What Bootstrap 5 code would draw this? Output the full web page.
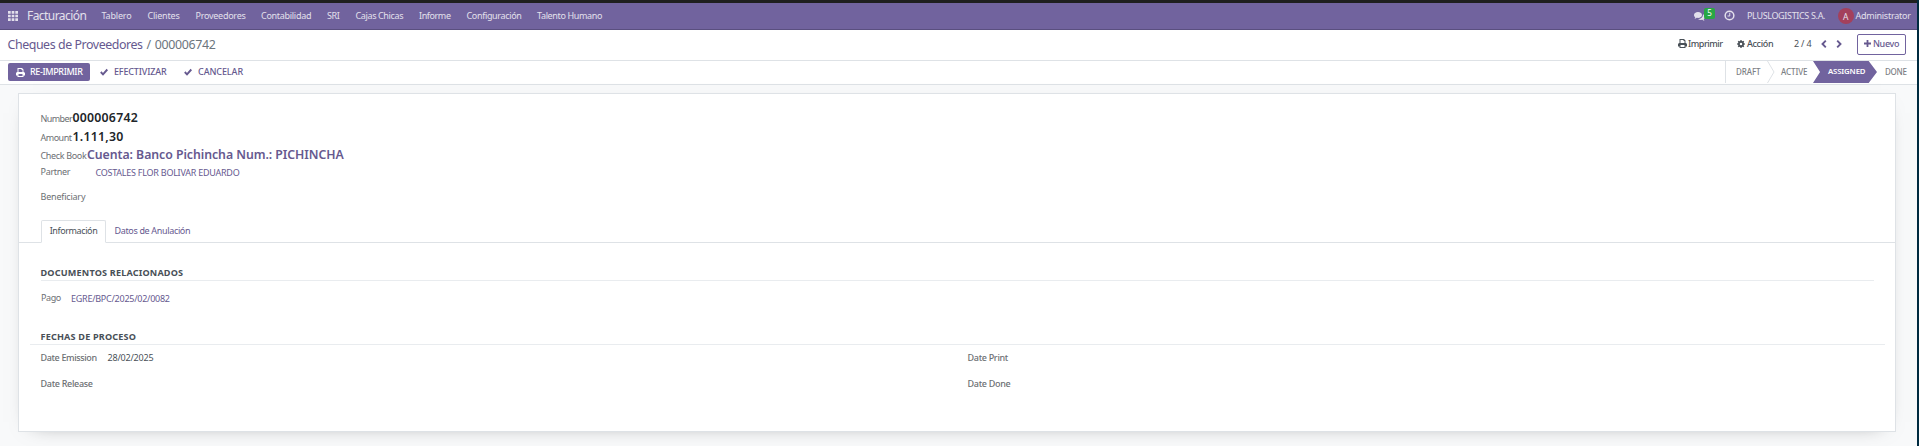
<!DOCTYPE html>
<html lang="es">
<head>
<meta charset="utf-8">
<title>Cheques de Proveedores</title>
<link href="https://cdn.jsdelivr.net/npm/bootstrap@5.3.0/dist/css/bootstrap.min.css" rel="stylesheet">
<style>
:root{--brand:#71639e;--line:#dee2e6;--ink:#66598f}
html,body{height:446px;overflow:hidden}
body{font:400 9px/18px "Noto Sans","Open Sans",sans-serif;color:#495057;background:#f8f9fa;border-right:2px solid #002b40;letter-spacing:-.3px;white-space:nowrap}
a{color:var(--ink);text-decoration:none}
svg{display:block;fill:currentColor;flex:none}
.edge{height:2.6px;margin-right:-2px;background:#1f1f1f}
/* top bar */
.topbar{height:27.4px;background:var(--brand);border-bottom:1px solid #5a4f7f;color:#e3e0ec;padding:0 7px 0 8px}
.topbar a{color:inherit}
.brand-name{font-size:12px;letter-spacing:-.56px;width:59px;margin:0 15.5px 0 9px;color:#eeecf3}
.menu{gap:16px}
.menu a:nth-child(1){width:30px;letter-spacing:-.18px}
.menu a:nth-child(2){width:32px;letter-spacing:-.2px}
.menu a:nth-child(3){width:49.5px;letter-spacing:-.26px}
.menu a:nth-child(4){width:50px;letter-spacing:-.29px}
.menu a:nth-child(5){width:12.5px;letter-spacing:-.35px}
.menu a:nth-child(6){width:47.5px;letter-spacing:-.37px}
.menu a:nth-child(7){width:31.5px;letter-spacing:-.4px}
.menu a:nth-child(8){width:54.5px;letter-spacing:-.34px}
.menu a:nth-child(9){letter-spacing:-.35px}
.chat{width:6px;top:1px}
.chatcount{position:absolute;left:10px;top:-4px;width:11px;height:11px;background:#28a745;color:#fff;font-size:8px;line-height:10px;text-align:center;border-radius:2px}
.clock{margin-right:12px}
.company{width:90.5px;letter-spacing:-.34px}
.avatar{width:16px;height:16px;border-radius:50%;background:#a4405c;font-size:8.5px;line-height:17px;text-align:center}
.user{margin-left:2px;width:54.5px;letter-spacing:-.26px}
/* breadcrumb row */
.crumbs{height:31px;background:#fff;border-bottom:1px solid var(--line);padding:0 11px 0 7.5px}
.crumbs .path{font-size:12.4px;letter-spacing:-.43px;color:#6c757d}
.crumbs .path .rec{letter-spacing:-.33px}
.tools{font-weight:500;padding-bottom:2px}
.t-print{margin-left:1.5px;width:49px;letter-spacing:-.45px}
.t-act{margin-left:2px;width:47px;letter-spacing:-.35px}
.t-page{width:27px;font-weight:400;letter-spacing:-.2px}
.chev{color:var(--ink)}
.chev.prev{margin-right:9px}
.chev.next{margin-right:15px}
.newbtn{height:21px;width:49px;border:1px solid var(--brand);border-radius:2px;font-weight:500;padding-bottom:2px;gap:2px;letter-spacing:-.36px}
/* button row */
.actions{height:24px;background:#fff;border-bottom:1px solid var(--line);padding-left:8px;font-weight:500;color:var(--ink)}
.printbtn{background:var(--brand);color:#fff;height:18px;width:82px;padding-left:8px;border-radius:2px;gap:5px;letter-spacing:-.37px}
.tick{margin-right:6px}
.printbtn + .tick{margin-left:10px}
.a-cash{width:70px;letter-spacing:-.16px}
.a-cancel{letter-spacing:-.09px}
.steps{height:22px;line-height:21px;font-size:8px;color:#7c8085;border-left:1px solid var(--line);letter-spacing:-.08px;width:192px;margin-top:-1px}
.steps .s1{width:41px;padding-left:10px}
.steps .s2{width:38px;padding-left:6px}
.steps .now{background:var(--brand);color:#fff;font-size:7.8px;font-weight:600;width:64px;padding-left:15px;letter-spacing:-.15px;clip-path:polygon(0 0,87% 0,100% 50%,87% 100%,0 100%,11% 50%)}
.steps .s4{padding-left:8px;letter-spacing:-.3px}
/* form sheet */
.sheet{margin:8px 21px 0 18px;height:339px;border:1px solid var(--line);background:#fff;box-shadow:0 5px 20px -15px rgba(0,0,0,.55);padding-top:15px}
.fieldrow{height:18px;padding-left:21.5px}
.fieldrow.amount{margin-top:1px}
.fieldrow.partner{margin-top:-1px}
.lbl{color:#6c6f73}
.val{font-size:12.3px;font-weight:600;color:#212529;letter-spacing:.24px}
.f-num{width:32px;letter-spacing:-.6px}
.f-amt{width:32px;letter-spacing:-.5px}
.f-book{width:46.5px;letter-spacing:-.34px}
.val.book{color:var(--ink);letter-spacing:-.05px}
.f-partner{width:55px}
.m2o{line-height:20px;letter-spacing:-.25px}
.f-ben{margin-top:7px;letter-spacing:-.2px}
.tabsrow{height:23px;border-bottom:1px solid var(--line);padding-left:22px;margin-top:14px}
.tabsrow .on{height:23px;width:65px;border:1px solid var(--line);border-bottom-color:#fff;background:#fff;border-radius:2px 2px 0 0;text-align:center;line-height:20px;color:#495057;letter-spacing:-.4px}
.tabsrow .off{padding-left:8.5px;line-height:22px;letter-spacing:-.34px}
.docs{padding:19px 21px 0 22px}
.dates{font-weight:500;padding:17px 10px 0 11px}
.group-title{font-size:9.1px;font-weight:700;letter-spacing:.18px;height:19px;border-bottom:1px solid #e9ecef;line-height:22px;text-indent:-.5px}
.dates .group-title,.daterow{padding-left:11px}
.docs .pago{margin-top:8px}
.pago .lbl{width:30px;letter-spacing:-.4px}
.daterow{padding-top:4px;text-indent:-.5px}
.daterow + .daterow{padding-top:8px}
.daterow .right{padding-left:5px}
.d-em{width:67px;letter-spacing:-.36px}
.d-val{font-weight:400;letter-spacing:-.2px}
</style>
</head>
<body>
<div class="edge"></div>
<nav class="topbar d-flex align-items-center">
  <svg width="10" height="10" viewBox="0 0 10 10"><path d="M0 0h2.7v2.7H0zM3.65 0h2.7v2.7h-2.7zM7.3 0H10v2.7H7.3zM0 3.65h2.7v2.7H0zM3.65 3.65h2.7v2.7h-2.7zM7.3 3.65H10v2.7H7.3zM0 7.3h2.7V10H0zM3.65 7.3h2.7V10h-2.7zM7.3 7.3H10V10H7.3z"/></svg>
  <a class="brand-name" href="#">Facturación</a>
  <div class="menu d-flex">
    <a href="#">Tablero</a>
    <a href="#">Clientes</a>
    <a href="#">Proveedores</a>
    <a href="#">Contabilidad</a>
    <a href="#">SRI</a>
    <a href="#">Cajas Chicas</a>
    <a href="#">Informe</a>
    <a href="#">Configuración</a>
    <a href="#">Talento Humano</a>
  </div>
  <div class="d-flex align-items-center ms-auto">
    <div class="chat position-relative me-4"><svg width="11" height="9" viewBox="0 0 22 18"><path d="M8 0c4.600 0 8 2.700 8 6s-3.400 6-8 6c-1 0-1.800-.1-2.600-.3C4 13 2.500 13.500 1 13.700c.8-.8 1.400-1.700 1.600-3C1 9.600 0 7.900 0 6c0-3.300 3.400-6 8-6zM18 4.500c2.400 1 4 3 4 5.300 0 1.800-1 3.500-2.600 4.600.2 1.300.8 2.300 1.600 3-1.500-.2-3-.8-4.300-1.900-3 .8-6.500.1-8.700-1.500 6 0 10.300-4 10-9.500z"/></svg><span class="chatcount">5</span></div>
    <svg class="clock" width="11" height="11" viewBox="0 0 22 22"><circle cx="11" cy="11" r="8.700" fill="none" stroke="currentColor" stroke-width="3"/><path d="M11.500 5.500v6.500H7" fill="none" stroke="currentColor" stroke-width="2"/></svg>
    <span class="company">PLUSLOGISTICS S.A.</span>
    <span class="avatar">A</span>
    <span class="user">Administrator</span>
  </div>
</nav>
<header class="crumbs d-flex align-items-center">
  <div class="path"><a href="#">Cheques de Proveedores</a><span class="mx-1">/</span><span class="rec">000006742</span></div>
  <div class="d-flex align-items-center ms-auto">
    <div class="tools d-flex align-items-center">
      <svg width="9" height="9" viewBox="0 0 18 18"><path d="M4 0h8l3 3v5h-2V4h-2V2H5v6H3V0zM2 8h14l2 2v5h-3v3H3v-3H0v-5zM5 12v4h8v-4z" fill-rule="evenodd"/></svg>
      <span class="t-print">Imprimir</span>
      <svg width="8" height="8" viewBox="0 0 16 16"><path fill-rule="evenodd" d="M6.800 0h2.400l.4 2.200 1.300.5L12.700 1.500l1.800 1.800-1.200 1.800.5 1.300 2.200.4v2.400l-2.200.4-.5 1.300 1.200 1.800-1.800 1.800-1.800-1.200-1.300.5-.4 2.200H6.800l-.4-2.200-1.300-.5-1.800 1.200-1.800-1.800 1.200-1.800-.5-1.300L0 9.200V6.800l2.200-.4.500-1.300-1.200-1.800 1.800-1.800 1.800 1.200 1.300-.5zM8 5.500a2.500 2.500 0 1 0 0 5 2.500 2.500 0 0 0 0-5z"/></svg>
      <span class="t-act">Acción</span>
      <span class="t-page">2 / 4</span>
      <svg class="chev prev" width="6" height="8" viewBox="0 0 6 8"><path d="M4.800.700 1.500 4l3.300 3.300" fill="none" stroke="currentColor" stroke-width="1.900"/></svg>
      <svg class="chev next" width="6" height="8" viewBox="0 0 6 8"><path d="M1.200.700 4.500 4 1.200 7.300" fill="none" stroke="currentColor" stroke-width="1.900"/></svg>
    </div>
    <a class="newbtn d-flex align-items-center justify-content-center" href="#"><svg width="7" height="7" viewBox="0 0 7 7"><path d="M2.600 0h1.800v2.600H7v1.800H4.400V7H2.600V4.400H0V2.600h2.600z"/></svg><span>Nuevo</span></a>
  </div>
</header>
<div class="actions d-flex align-items-center">
  <a class="printbtn d-flex align-items-center" href="#"><svg width="9" height="9" viewBox="0 0 18 18"><path d="M4 0h8l3 3v5h-2V4h-2V2H5v6H3V0zM2 8h14l2 2v5h-3v3H3v-3H0v-5zM5 12v4h8v-4z" fill-rule="evenodd"/></svg><span>RE-IMPRIMIR</span></a>
  <svg class="tick" width="8" height="8" viewBox="0 0 8 8"><path d="M.8 4 3 6.300 7.300 1.500" fill="none" stroke="currentColor" stroke-width="1.900"/></svg>
  <span class="a-cash">EFECTIVIZAR</span>
  <svg class="tick" width="8" height="8" viewBox="0 0 8 8"><path d="M.8 4 3 6.300 7.300 1.500" fill="none" stroke="currentColor" stroke-width="1.900"/></svg>
  <span class="a-cancel">CANCELAR</span>
  <div class="steps d-flex ms-auto">
    <span class="s1">DRAFT</span>
    <svg width="8" height="22" viewBox="0 0 8 22"><path d="M.5 0 7 11 .5 22" fill="none" stroke="#dee2e6"/></svg>
    <span class="s2">ACTIVE</span>
    <span class="now">ASSIGNED</span>
    <span class="s4">DONE</span>
  </div>
</div>
<main class="sheet">
  <div class="fieldrow d-flex align-items-baseline"><span class="lbl f-num">Number</span><span class="val">000006742</span></div>
  <div class="fieldrow amount d-flex align-items-baseline"><span class="lbl f-amt">Amount</span><span class="val">1.111,30</span></div>
  <div class="fieldrow d-flex align-items-baseline"><span class="lbl f-book">Check Book</span><a class="val book" href="#">Cuenta: Banco Pichincha Num.: PICHINCHA</a></div>
  <div class="fieldrow partner d-flex"><span class="lbl f-partner">Partner</span><a href="#" class="m2o">COSTALES FLOR BOLIVAR EDUARDO</a></div>
  <div class="fieldrow f-ben lbl">Beneficiary</div>
  <div class="tabsrow d-flex"><a class="on" href="#">Información</a><a class="off" href="#">Datos de Anulación</a></div>
  <section class="docs">
    <div class="group-title">DOCUMENTOS RELACIONADOS</div>
    <div class="pago d-flex"><span class="lbl">Pago</span><a href="#" class="m2o">EGRE/BPC/2025/02/0082</a></div>
  </section>
  <section class="dates">
    <div class="group-title">FECHAS DE PROCESO</div>
    <div class="row g-0 daterow">
      <div class="col-6 d-flex"><span class="lbl d-em">Date Emission</span><span class="d-val">28/02/2025</span></div>
      <div class="col-6 lbl right">Date Print</div>
    </div>
    <div class="row g-0 daterow">
      <div class="col-6 lbl">Date Release</div>
      <div class="col-6 lbl right">Date Done</div>
    </div>
  </section>
</main>
</body>
</html>
